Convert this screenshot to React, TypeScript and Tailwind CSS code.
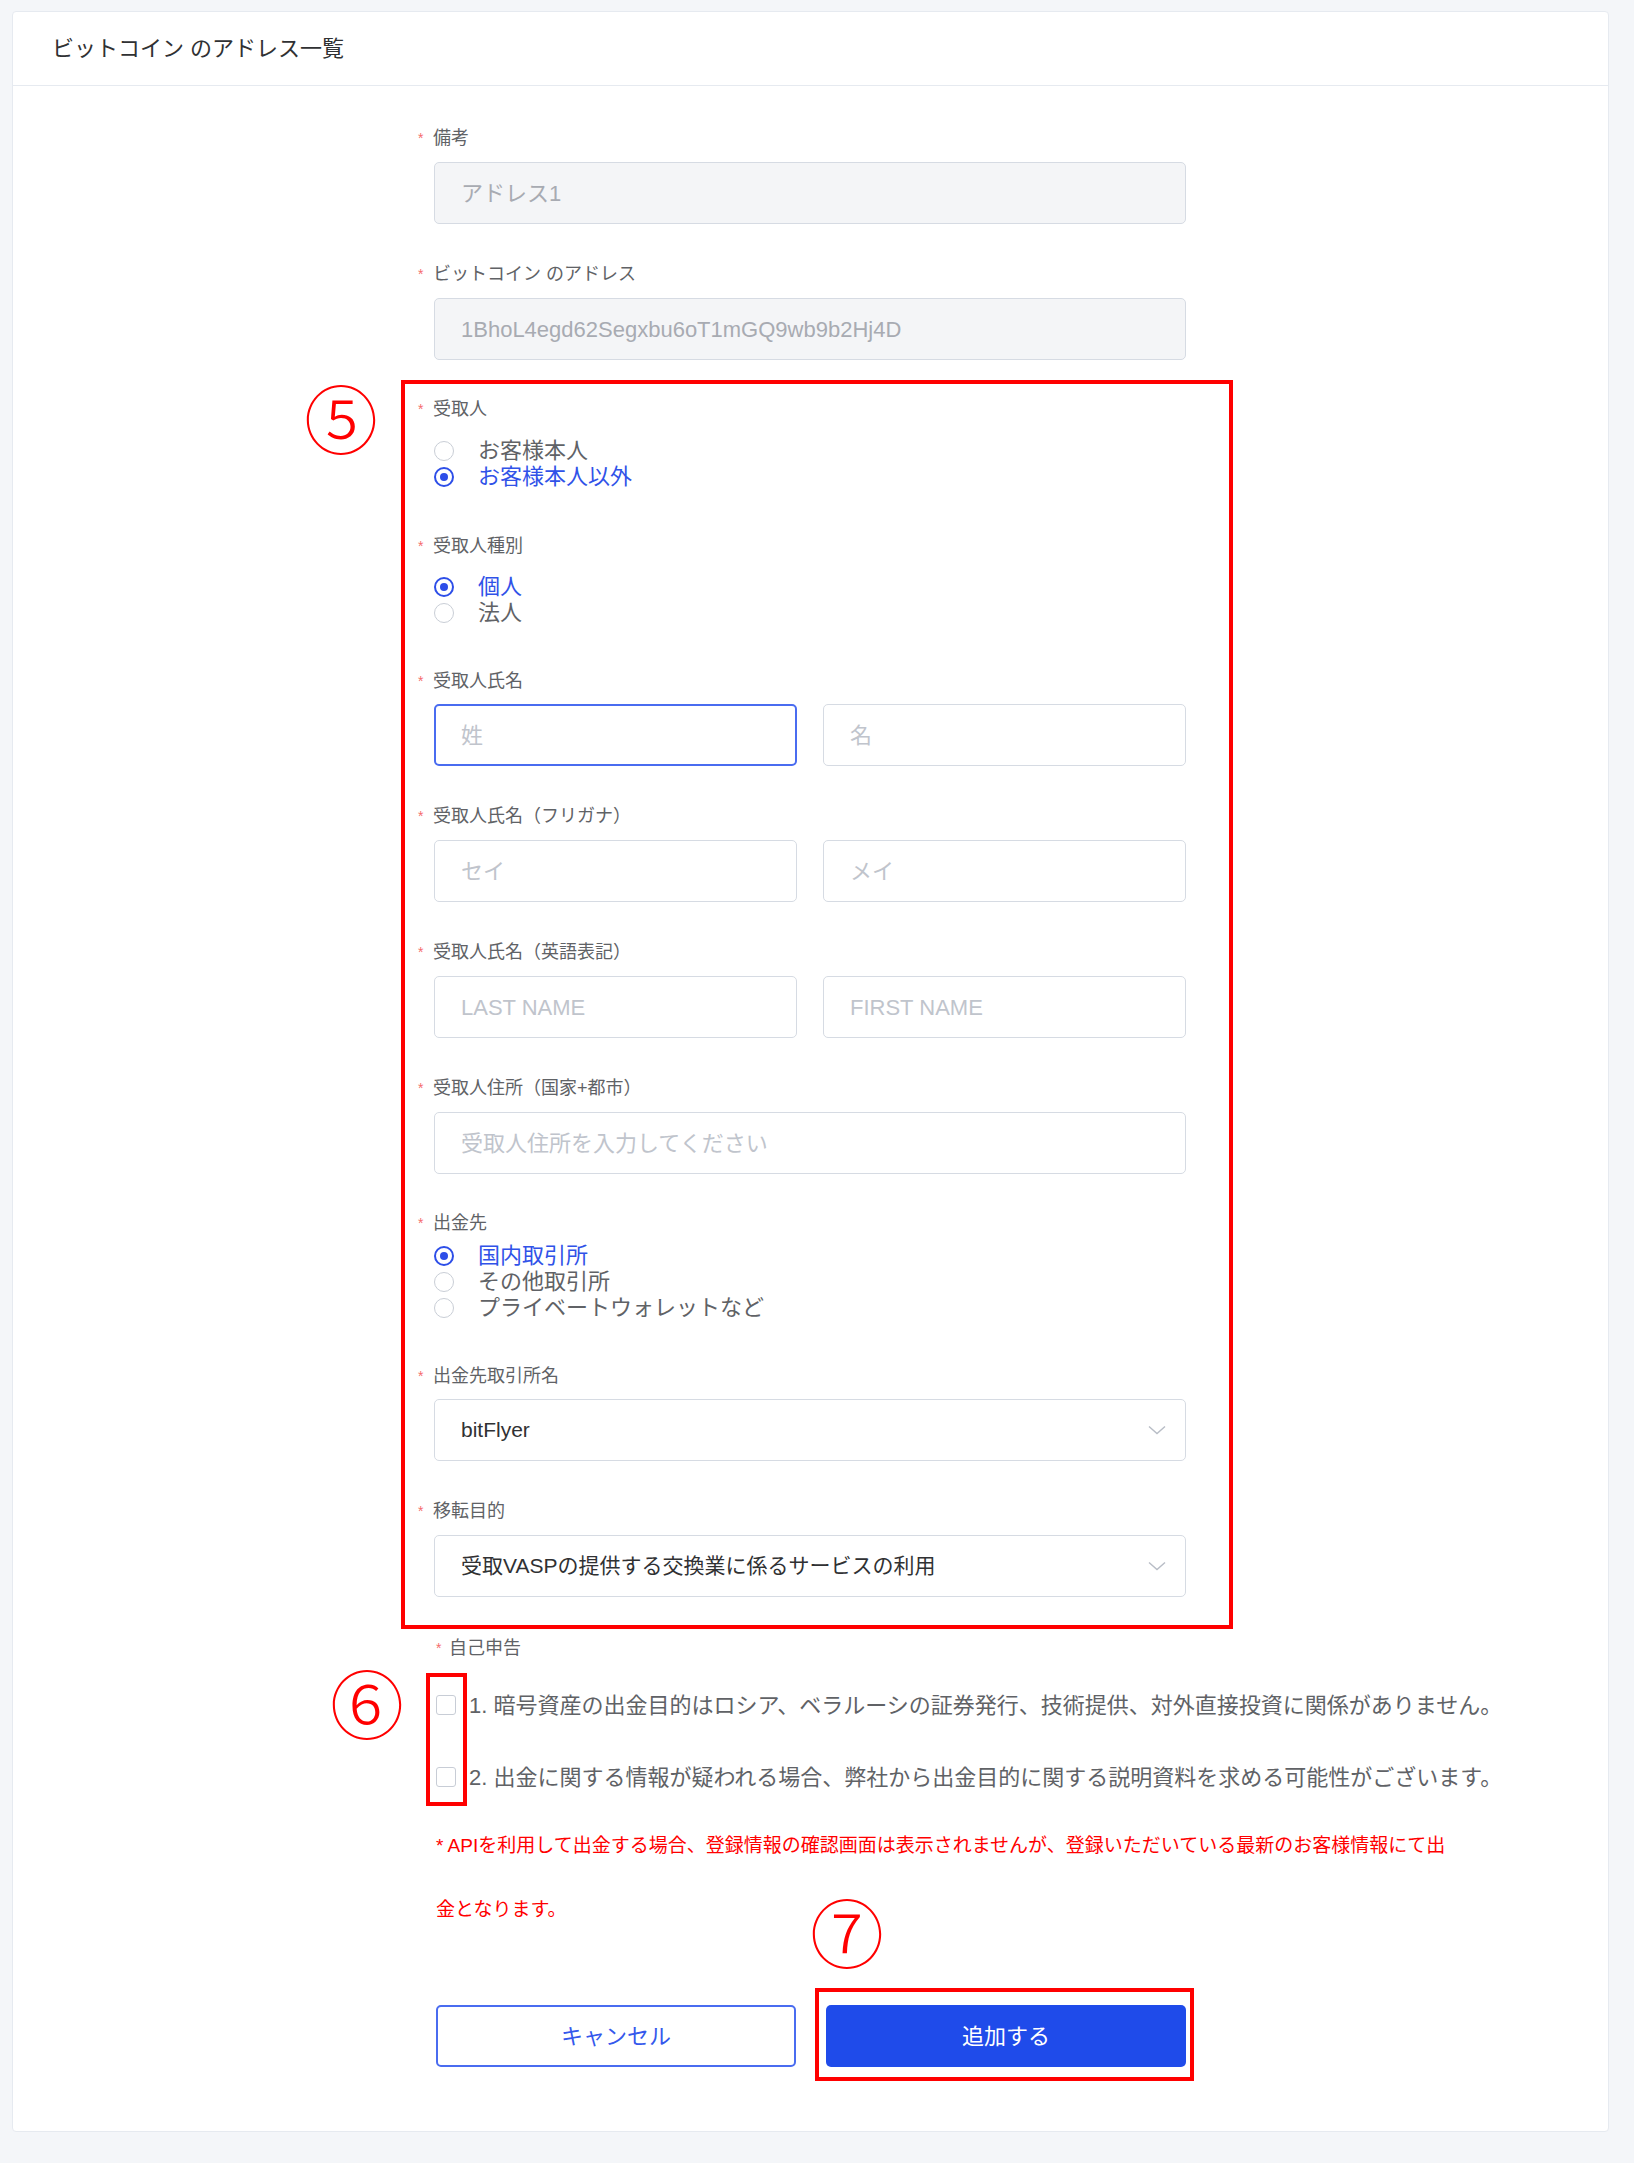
import React from "react";

function Label({ children }: { children: React.ReactNode }) {
  return (
    <div className="-ml-4 flex h-6 items-center text-[18px] leading-6 text-[#606266]">
      <span className="w-[15px] text-[14px] text-[#f56c6c]">*</span>
      <span>{children}</span>
    </div>
  );
}

function Radio({ label, checked }: { label: string; checked?: boolean }) {
  return (
    <div className="flex h-[26px] items-center">
      {checked ? (
        <span className="flex h-[20px] w-[20px] items-center justify-center rounded-full border-2 border-[#2d4ee8]">
          <span className="h-[8px] w-[8px] rounded-full bg-[#2d4ee8]" />
        </span>
      ) : (
        <span className="h-[20px] w-[20px] rounded-full border-[1.5px] border-[#c9ced6]" />
      )}
      <span className={checked ? "ml-[24px] text-[22px] leading-[26px] text-[#3052e8]" : "ml-[24px] text-[22px] leading-[26px] text-[#606266]"}>
        {label}
      </span>
    </div>
  );
}

function Input({ placeholder, focused }: { placeholder: string; focused?: boolean }) {
  return (
    <div
      className={
        focused
          ? "flex h-[62px] items-center rounded-[5px] border-2 border-[#4a6cf0] px-[25px] text-[22px] text-[#c0c4cc]"
          : "flex h-[62px] items-center rounded-[5px] border border-[#d6dbe3] px-[26px] text-[22px] text-[#c0c4cc]"
      }
    >
      {placeholder}
    </div>
  );
}

function Disabled({ value }: { value: string }) {
  return (
    <div className="flex h-[62px] items-center rounded-[5px] border border-[#d6dbe3] bg-[#f4f5f7] px-[26px] text-[22px] text-[#a8abb2]">
      {value}
    </div>
  );
}

function Select({ value }: { value: string }) {
  return (
    <div className="flex h-[62px] items-center justify-between rounded-[5px] border border-[#d6dbe3] pl-[26px] pr-[19px] text-[21px] text-[#303133]">
      <span>{value}</span>
      <svg width="18" height="10" viewBox="0 0 18 10" fill="none" stroke="#b8bdc6" strokeWidth="1.4">
        <path d="M1 1.5 L9 8.5 L17 1.5" />
      </svg>
    </div>
  );
}

function Circled({ children, className }: { children: string; className: string }) {
  return (
    <span className={`absolute flex h-[68px] w-[68px] items-center justify-center text-[74px] leading-none font-light text-[#ff0000] ${className}`}>
      {children}
    </span>
  );
}

function Checkbox({ text }: { text: string }) {
  return (
    <div className="flex h-12 items-center">
      <span className="h-[20px] w-[20px] shrink-0 rounded-[3px] border-[1.5px] border-[#c8cdd6]" />
      <span className="ml-[13px] whitespace-nowrap text-[22px] text-[#606266]">{text}</span>
    </div>
  );
}

export default function App() {
  return (
    <div className="min-h-[2163px] bg-[#f4f6f9] pt-[11px] font-['Liberation_Sans','Noto_Sans_CJK_JP',sans-serif]">
      <div className="ml-[12px] w-[1597px] rounded-[4px] border border-[#e6eaf0] bg-white">
        <div className="flex h-[74px] items-center border-b border-[#e6eaf0] pl-[39px] text-[22px] text-[#303133]">
          ビットコイン のアドレス一覧
        </div>

        <div className="pb-[64px] pl-[421px] pt-[40px]">
          <div className="w-[752px]">
            <Label>備考</Label>
            <div className="mt-3">
              <Disabled value="アドレス1" />
            </div>

            <div className="mt-[38px]">
              <Label>ビットコイン のアドレス</Label>
            </div>
            <div className="mt-3">
              <Disabled value="1BhoL4egd62Segxbu6oT1mGQ9wb9b2Hj4D" />
            </div>
          </div>

          {/* section 5 */}
          <div className="relative -ml-[33px] mt-5 w-[832px] border-4 border-[#ff0000] pb-[28px] pl-[29px] pr-[43px] pt-[13px]">
            <Circled className="-left-[98px] top-[5px]">⑤</Circled>

            <Label>受取人</Label>
            <div className="mt-[17px]">
              <Radio label="お客様本人" />
              <Radio label="お客様本人以外" checked />
            </div>

            <div className="mt-[44px]">
              <Label>受取人種別</Label>
            </div>
            <div className="mt-4">
              <Radio label="個人" checked />
              <Radio label="法人" />
            </div>

            <div className="mt-[43px]">
              <Label>受取人氏名</Label>
            </div>
            <div className="mt-[11px] grid grid-cols-2 gap-[26px]">
              <Input placeholder="姓" focused />
              <Input placeholder="名" />
            </div>

            <div className="mt-[38px]">
              <Label>受取人氏名（フリガナ）</Label>
            </div>
            <div className="mt-3 grid grid-cols-2 gap-[26px]">
              <Input placeholder="セイ" />
              <Input placeholder="メイ" />
            </div>

            <div className="mt-[38px]">
              <Label>受取人氏名（英語表記）</Label>
            </div>
            <div className="mt-3 grid grid-cols-2 gap-[26px]">
              <Input placeholder="LAST NAME" />
              <Input placeholder="FIRST NAME" />
            </div>

            <div className="mt-[38px]">
              <Label>受取人住所（国家+都市）</Label>
            </div>
            <div className="mt-3">
              <Input placeholder="受取人住所を入力してください" />
            </div>

            <div className="mt-[37px]">
              <Label>出金先</Label>
            </div>
            <div className="mt-2">
              <Radio label="国内取引所" checked />
              <Radio label="その他取引所" />
              <Radio label="プライベートウォレットなど" />
            </div>

            <div className="mt-[43px]">
              <Label>出金先取引所名</Label>
            </div>
            <div className="mt-[11px]">
              <Select value="bitFlyer" />
            </div>

            <div className="mt-[38px]">
              <Label>移転目的</Label>
            </div>
            <div className="mt-3">
              <Select value="受取VASPの提供する交換業に係るサービスの利用" />
            </div>
          </div>

          <div className="ml-[2px] mt-[7px] flex h-6 items-center text-[18px] leading-6 text-[#606266]">
            <span className="w-[13px] text-[14px] text-[#f56c6c]">*</span>
            <span>自己申告</span>
          </div>

          {/* section 6 */}
          <div className="relative mt-[21px] flex flex-col gap-6 pl-[2px]">
            <span className="absolute -left-[8px] -top-[8px] h-[133px] w-[41px] border-4 border-[#ff0000]" />
            <Circled className="-left-[101px] -top-[7px]">⑥</Circled>
            <Checkbox text="1. 暗号資産の出金目的はロシア、ベラルーシの証券発行、技術提供、対外直接投資に関係がありません。" />
            <Checkbox text="2. 出金に関する情報が疑われる場合、弊社から出金目的に関する説明資料を求める可能性がございます。" />
          </div>

          <div className="ml-[2px] mt-[13px] text-[19px] leading-[64px] text-[#ff0000]">
            <div>* APIを利用して出金する場合、登録情報の確認画面は表示されませんが、登録いただいている最新のお客様情報にて出</div>
            <div>金となります。</div>
          </div>

          {/* buttons */}
          <div className="relative mt-[63px] flex gap-[30px] pl-[2px]">
            <span className="absolute left-[381px] -top-[17px] h-[93px] w-[379px] border-4 border-[#ff0000]" />
            <Circled className="left-[379px] -top-[102px]">⑦</Circled>
            <button className="h-[62px] w-[360px] rounded-[5px] border-2 border-[#4a6cf0] bg-white text-[22px] text-[#3558ec]">
              キャンセル
            </button>
            <button className="relative h-[62px] w-[360px] rounded-[5px] bg-[#1f4bea] text-[22px] text-white">
              追加する
            </button>
          </div>
        </div>
      </div>
    </div>
  );
}
